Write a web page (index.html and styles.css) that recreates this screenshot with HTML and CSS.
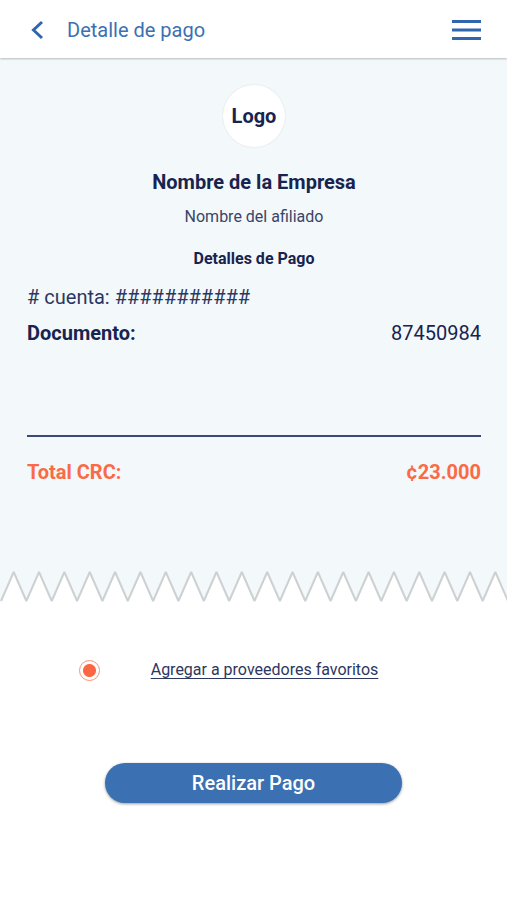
FILE: index.html
```html
<!DOCTYPE html>
<html lang="es">
<head>
    <meta charset="UTF-8">
    <meta name="viewport" content="width=device-width, initial-scale=1.0">
    <title>Detalle de pago</title>
    <link rel="stylesheet" href="styles.css">
</head>
<body>
    <header class="top-bar">
        <button class="icon-button" type="button" aria-label="Volver">
            <svg width="20" height="20" viewBox="0 0 20 20" fill="none" stroke="currentColor" stroke-width="3">
                <path d="M16 2 L7.5 10 L16 18"/>
            </svg>
        </button>
        <h1 class="title">Detalle de pago</h1>
        <button class="icon-button" type="button" aria-label="Menú">
            <svg width="30" height="22" viewBox="0 0 30 22" fill="currentColor">
                <path d="M1 1h29v3H1zM1 9.5h29v3H1zM1 18h29v3H1z"/>
            </svg>
        </button>
    </header>

    <main>
        <section class="receipt">
            <div class="logo">Logo</div>
            <h2 class="company">Nombre de la Empresa</h2>
            <p class="member">Nombre del afiliado</p>
            <h3 class="subtitle">Detalles de Pago</h3>
            <p class="account"># cuenta: ###########</p>
            <div class="row document">
                <strong>Documento:</strong>
                <span>87450984</span>
            </div>
            <div class="row total">
                <strong>Total CRC:</strong>
                <strong>¢23.000</strong>
            </div>
        </section>
        <!-- torn paper edge -->
        <svg class="torn-edge" viewBox="0 0 500 34" preserveAspectRatio="none" aria-hidden="true">
            <path class="torn-paper" d="M0 0V33L1 31l12.5-29l12.5 29l12.5-29l12.5 29l12.5-29l12.5 29l12.5-29l12.5 29l12.5-29l12.5 29l12.5-29l12.5 29l12.5-29l12.5 29l12.5-29l12.5 29l12.5-29l12.5 29l12.5-29l12.5 29l12.5-29l12.5 29l12.5-29l12.5 29l12.5-29l12.5 29l12.5-29l12.5 29l12.5-29l12.5 29l12.5-29l12.5 29l12.5-29l12.5 29l12.5-29l12.5 29l12.5-29l12.5 29l12.5-29l12.5 29V0z"/>
            <path class="torn-line" d="M1 31l12.5-29l12.5 29l12.5-29l12.5 29l12.5-29l12.5 29l12.5-29l12.5 29l12.5-29l12.5 29l12.5-29l12.5 29l12.5-29l12.5 29l12.5-29l12.5 29l12.5-29l12.5 29l12.5-29l12.5 29l12.5-29l12.5 29l12.5-29l12.5 29l12.5-29l12.5 29l12.5-29l12.5 29l12.5-29l12.5 29l12.5-29l12.5 29l12.5-29l12.5 29l12.5-29l12.5 29l12.5-29l12.5 29l12.5-29l12.5 29"/>
        </svg>

        <form class="actions">
            <div class="favorite">
                <input type="radio" id="favorite" name="favorite" checked>
                <label for="favorite">Agregar a proveedores favoritos</label>
            </div>
            <button class="pay-button" type="button">Realizar Pago</button>
        </form>
    </main>
</body>
</html>
```
FILE: styles.css
```css
* {
    box-sizing: border-box;
}
body {
    margin: 0;
    background-color: #fff;
    color: #17244f;
    font-family: Roboto, sans-serif;
    font-size: 20px;
    line-height: 24px;
}
h1, h2, h3, p {
    margin: 0;
}
.top-bar {
    position: relative;
    display: flex;
    align-items: center;
    height: 58px;
    padding: 2px 26px 0;
    background-color: #fff;
    color: #3b70b2;
    box-shadow: 0 1px 2px rgba(0,0,0,0.25);
}
.icon-button {
    display: flex;
    padding: 0;
    border: none;
    background: none;
    color: #2f66ad;
    cursor: pointer;
}
.title {
    flex: 1;
    margin-left: 21px;
    font-size: 20px;
    font-weight: 400;
}
.receipt {
    display: flex;
    flex-direction: column;
    padding: 27px 26px 86px 27px;
    background-color: #f3f8fb;
}
.logo {
    display: flex;
    align-items: center;
    justify-content: center;
    align-self: center;
    width: 62px;
    height: 62px;
    margin-bottom: 23px;
    border-radius: 50%;
    background-color: #fff;
    box-shadow: 0 0 2px rgba(0,0,0,0.12);
    font-weight: 700;
}
.company {
    font-size: 20px;
    text-align: center;
}
.member {
    margin-top: 11px;
    color: #3a4468;
    font-size: 16px;
    text-align: center;
}
.subtitle {
    margin-top: 18px;
    font-size: 16px;
    text-align: center;
}
.account {
    margin-top: 14px;
    color: #2c3761;
}
.row {
    display: flex;
    justify-content: space-between;
}
.document {
    margin-top: 12px;
    padding-bottom: 90px;
    border-bottom: 2px solid #3a4a75;
}
.total {
    margin-top: 23px;
    color: #fb6a45;
}
.torn-edge {
    display: block;
    width: 100%;
    height: 34px;
}
.torn-paper {
    fill: #f3f8fb;
}
.torn-line {
    fill: none;
    stroke: #cdd1d2;
    stroke-width: 2;
    stroke-linejoin: bevel;
}
.actions {
    display: flex;
    flex-direction: column;
    align-items: center;
    padding: 54px 26px 97px;
}
.favorite {
    display: flex;
    align-items: center;
    gap: 51px;
    margin-right: 50px;
}
.favorite input {
    appearance: none;
    width: 21px;
    height: 21px;
    margin: 0;
    border: 1px solid #fb8f74;
    border-radius: 50%;
    background: radial-gradient(circle, #fd6640 6px, #fff 7px);
}
.favorite label {
    color: #2c3761;
    font-size: 16px;
    text-decoration: underline;
    text-underline-offset: 3px;
}
.pay-button {
    width: 65%;
    min-width: 297px;
    height: 40px;
    margin-top: 81px;
    border: none;
    border-radius: 20px;
    background-color: #3b70b2;
    box-shadow: 0 1px 3px rgba(0,0,0,0.4);
    color: #fff;
    font-family: inherit;
    font-size: 20px;
    font-weight: 500;
    cursor: pointer;
}
```
